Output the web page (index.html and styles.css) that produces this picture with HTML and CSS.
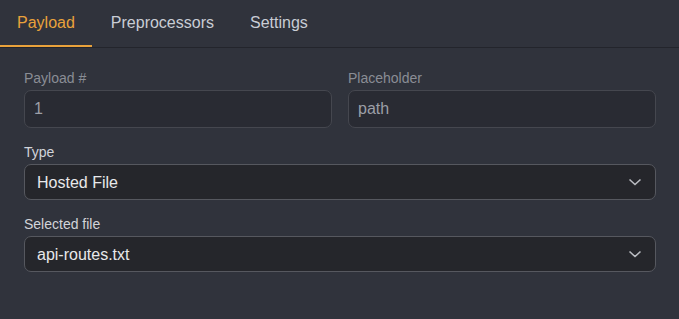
FILE: index.html
```html
<!DOCTYPE html>
<html lang="en">
<head>
  <meta charset="UTF-8">
  <title>Payload</title>
  <meta name="viewport" content="width=device-width, initial-scale=1.0">
  <link rel="stylesheet" href="styles.css">
</head>
<body>

  <div class="tabs">
    <div class="tab active">Payload</div>
    <div class="tab">Preprocessors</div>
    <div class="tab">Settings</div>
  </div>

  <div class="form">
    <div class="row">
      <div class="field">
        <label class="muted" for="num">Payload #</label>
        <input id="num" type="text" value="1" readonly>
      </div>
      <div class="field">
        <label class="muted" for="ph">Placeholder</label>
        <input id="ph" type="text" value="path" readonly>
      </div>
    </div>

    <div class="field">
      <label for="type">Type</label>
      <div class="select-wrap">
        <select id="type">
          <option>Hosted File</option>
          <option>Simple List</option>
        </select>
        <svg class="chevron" width="14" height="8" viewBox="0 0 14 8"><path d="M1.5 1.5l5.5 5 5.5-5" fill="none" stroke="#b9bbc1" stroke-width="1.6"/></svg>
      </div>
    </div>

    <div class="field">
      <label for="file">Selected file</label>
      <div class="select-wrap">
        <select id="file">
          <option>api-routes.txt</option>
        </select>
        <svg class="chevron" width="14" height="8" viewBox="0 0 14 8"><path d="M1.5 1.5l5.5 5 5.5-5" fill="none" stroke="#b9bbc1" stroke-width="1.6"/></svg>
      </div>
    </div>
  </div>

</body>
</html>
```

FILE: styles.css
```css
body {
  font-family: 'Liberation Sans', Arial, sans-serif;
  background: #30333c;
  color: #e4e5e8;
  margin: 0;
}
.tabs {
  display: flex;
  height: 47px;
  border-bottom: 1px solid #23252c;
}
.tab {
  padding: 0 17px;
  font-size: 16px;
  line-height: 45px;
  color: #c9cdd5;
  border-bottom: 2px solid transparent;
}
.tab.active {
  color: #e9a23b;
  border-bottom-color: #e9a23b;
}
.tab + .tab {
  margin-left: 2px;
}
.form {
  padding: 22px 23px 0 24px;
}
.row {
  display: grid;
  grid-template-columns: 1fr 1fr;
  gap: 16px;
}
.field {
  margin-bottom: 16px;
}
label {
  display: block;
  font-size: 14px;
  line-height: 17px;
  margin-bottom: 3px;
  color: #d2d4d9;
}
label.muted {
  color: #8a8d95;
}
input, select {
  width: 100%;
  box-sizing: border-box;
  font-family: inherit;
  font-size: 16px;
  border-radius: 7px;
  outline: none;
}
input {
  height: 38px;
  padding: 0 9px;
  background: #292b33;
  border: 1px solid #45474f;
  color: #9c9fa7;
}
.select-wrap {
  position: relative;
}
select {
  height: 36px;
  padding: 0 12px;
  background: #25262b;
  border: 1px solid #56585f;
  color: #e8e8ea;
  appearance: none;
  -webkit-appearance: none;
}
.chevron {
  position: absolute;
  right: 14px;
  top: 14px;
  pointer-events: none;
}
```
